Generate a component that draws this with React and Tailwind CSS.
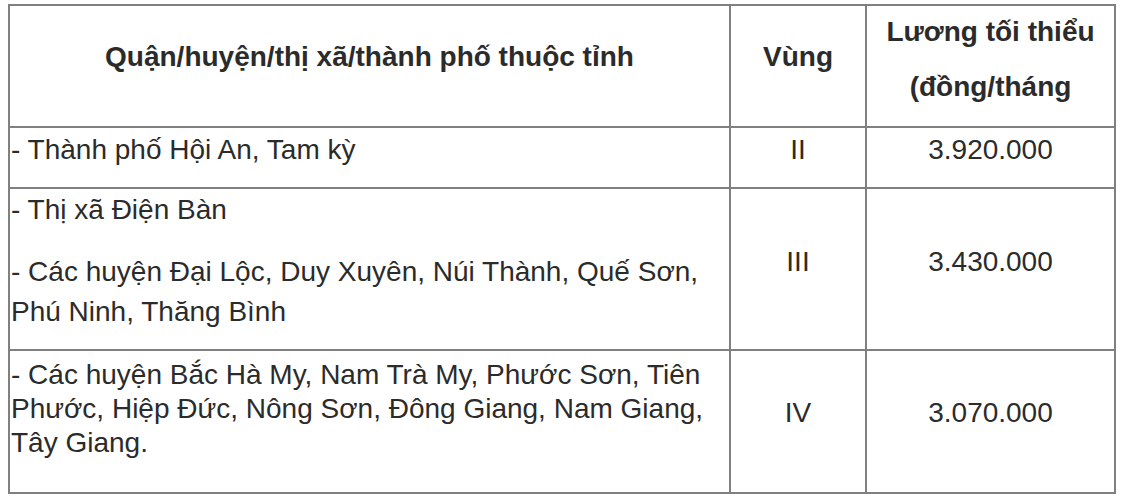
import React from "react";

const rows = [
  {
    h: "h-[61px]",
    place: [
      <p key="a" className="pt-[5px] leading-[34px]">- Thành phố Hội An, Tam kỳ</p>,
    ],
    zonePad: "pt-[5px]",
    zone: "II",
    wage: "3.920.000",
  },
  {
    h: "h-[162px]",
    place: [
      <p key="a" className="pt-[4px] leading-[34px]">- Thị xã Điện Bàn</p>,
      <p key="b" className="mt-[25px] leading-[40px]">
        - Các huyện Đại Lộc, Duy Xuyên, Núi Thành, Quế Sơn,
        <br />
        Phú Ninh, Thăng Bình
      </p>,
    ],
    zonePad: "pt-[56px]",
    zone: "III",
    wage: "3.430.000",
  },
  {
    h: "h-[143px]",
    place: [
      <p key="a" className="pt-[7px] leading-[34px]">
        - Các huyện Bắc Hà My, Nam Trà My, Phước Sơn, Tiên
        <br />
        Phước, Hiệp Đức, Nông Sơn, Đông Giang, Nam Giang,
        <br />
        Tây Giang.
      </p>,
    ],
    zonePad: "pt-[45px]",
    zone: "IV",
    wage: "3.070.000",
  },
];

export default function App() {
  return (
    <div className="w-[1122px] h-[502px] bg-white pl-[8px] pt-[4px] font-['Liberation_Sans',Arial,sans-serif] text-[28px] text-[#2b2b2b]">
      <table className="border-collapse border-2 border-[#808080] table-fixed w-[1106px]">
        <colgroup>
          <col className="w-[721px]" />
          <col className="w-[136px]" />
          <col className="w-[249px]" />
        </colgroup>
        <thead>
          <tr>
            <th className="h-[122px] border-2 border-[#808080] p-0 align-top font-bold">
              <p className="pt-[34px] leading-[34px] text-center">
                Quận/huyện/thị xã/thành phố thuộc tỉnh
              </p>
            </th>
            <th className="border-2 border-[#808080] p-0 align-top font-bold">
              <p className="pt-[34px] leading-[34px] text-center">Vùng</p>
            </th>
            <th className="border-2 border-[#808080] p-0 align-top font-bold">
              <p className="pt-[9px] leading-[34px] text-center">Lương tối thiểu</p>
              <p className="mt-[21px] leading-[34px] text-center">(đồng/tháng</p>
            </th>
          </tr>
        </thead>
        <tbody>
          {rows.map((r) => (
            <tr key={r.zone}>
              <td className={`${r.h} border-2 border-[#808080] p-0 pl-[1px] align-top whitespace-nowrap`}>
                {r.place}
              </td>
              <td className="border-2 border-[#808080] p-0 align-top text-center">
                <p className={`${r.zonePad} leading-[34px]`}>{r.zone}</p>
              </td>
              <td className="border-2 border-[#808080] p-0 align-top text-center">
                <p className={`${r.zonePad} leading-[34px]`}>{r.wage}</p>
              </td>
            </tr>
          ))}
        </tbody>
      </table>
    </div>
  );
}
